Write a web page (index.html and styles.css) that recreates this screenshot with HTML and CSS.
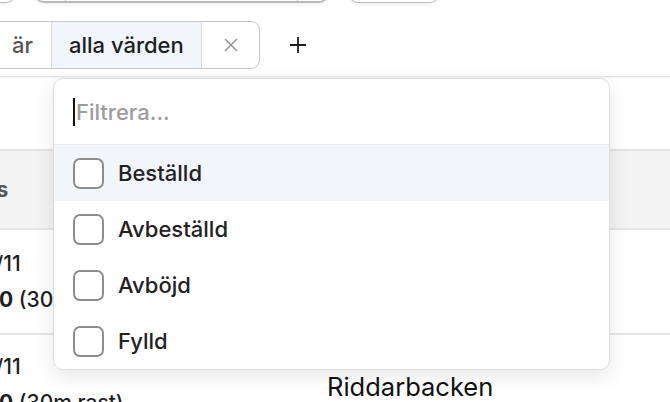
FILE: index.html
```html
<!DOCTYPE html>
<html lang="sv">
<head>
<meta charset="utf-8">
<title>Filter</title>
<link rel="stylesheet" href="styles.css">
</head>
<body>
<div class="page">
  <div class="topbar">
    <div class="tb-pill"></div>
    <div class="tb-group">
      <div class="tb-seg tb-seg-a"></div>
      <div class="tb-seg tb-seg-b"></div>
      <div class="tb-seg tb-seg-c"></div>
    </div>
    <div class="tb-btn"></div>
  </div>

  <div class="filters">
    <div class="chip">
      <div class="chip-seg chip-op">är</div>
      <div class="chip-seg chip-val">alla värden</div>
      <div class="chip-seg chip-x">
        <svg width="14" height="14" viewBox="0 0 14 14"><path d="M1 1L13 13M13 1L1 13" stroke="#8f8f8f" stroke-width="1.4" fill="none"/></svg>
      </div>
    </div>
    <div class="add">
      <svg width="18" height="18" viewBox="0 0 18 18"><path d="M9 1V17M1 9H17" stroke="#1f1f1f" stroke-width="1.8" fill="none"/></svg>
    </div>
  </div>

  <div class="table">
    <div class="thead">
      <div class="cell c1 th">Status</div>
      <div class="cell c2 th">Plats</div>
    </div>
    <div class="row">
      <div class="cell c1">
        <div>Ons 16/11</div>
        <div class="time"><b>7–16:30</b> (30m rast)</div>
      </div>
      <div class="cell c2">Riddarbacken</div>
    </div>
    <div class="row row-last">
      <div class="cell c1">
        <div>Ons 16/11</div>
        <div class="time"><b>7–16:30</b> (30m rast)</div>
      </div>
      <div class="cell c2">Riddarbacken</div>
    </div>
  </div>

  <div class="dropdown">
    <div class="dd-search">
      <span class="caret"></span><span class="placeholder">Filtrera...</span>
    </div>
    <ul class="dd-list">
      <li class="dd-item active"><span class="box"></span>Beställd</li>
      <li class="dd-item"><span class="box"></span>Avbeställd</li>
      <li class="dd-item"><span class="box"></span>Avböjd</li>
      <li class="dd-item"><span class="box"></span>Fylld</li>
    </ul>
  </div>
</div>
</body>
</html>
```

FILE: styles.css
```css
* { box-sizing: border-box; }
html, body { margin: 0; padding: 0; background: #fff; }
body {
  font-family: "Inter", "Noto Sans", sans-serif;
  font-weight: 500;
  color: #1e1e1e;
  width: 670px;
  height: 402px;
  overflow: hidden;
}
.page { position: relative; width: 670px; height: 402px; overflow: hidden; }

/* top bar, mostly scrolled off */
.topbar {
  display: flex;
  align-items: flex-end;
  height: 40px;
  margin-top: -37px;
}
.tb-pill {
  width: 40px; height: 40px;
  margin-left: -24px;
  border: 1px solid #bdbdbd;
  border-radius: 10px;
  box-shadow: 0 1px 3px rgba(0,0,0,0.08);
}
.tb-group {
  display: flex;
  margin-left: 18px;
  width: 295px; height: 40px;
  border: 1px solid #b9b9b9;
  border-bottom-width: 2px;
  border-radius: 10px;
  box-shadow: 0 2px 4px rgba(0,0,0,0.06);
}
.tb-seg-a { width: 31px; border-right: 1px solid #c9c9c9; }
.tb-seg-b { flex: 1; border-right: 1px solid #c9c9c9; }
.tb-seg-c { width: 30px; }
.tb-btn {
  margin-left: 19px;
  width: 92px; height: 40px;
  border: 1px solid #bdbdbd;
  border-radius: 10px;
  box-shadow: 0 2px 4px rgba(0,0,0,0.06);
}

/* filter chip row */
.filters {
  display: flex;
  align-items: flex-start;
  height: 56px;
  margin-top: 18px;
  border-bottom: 1px solid #e6e6e6;
  box-shadow: 0 1px 0 #f3f3f3;
}
.chip {
  display: flex;
  height: 48px;
  margin-left: -40px;
  border: 1px solid #c8c8c8;
  border-radius: 9px;
  overflow: hidden;
  font-size: 22px;
}
.chip-seg {
  display: flex;
  align-items: center;
  height: 100%;
}
.chip-op { width: 90px; padding-left: 51px; color: #555; }
.chip-val {
  width: 151px;
  padding-left: 17px;
  background: #f0f6fb;
  border-left: 1px solid #dcdcdc;
  border-right: 1px solid #dcdcdc;
  color: #1e1e1e;
}
.chip-x { width: 57px; justify-content: center; }
.add {
  display: flex;
  align-items: center;
  justify-content: center;
  width: 18px; height: 48px;
  margin-left: 29px;
}

/* table */
.table { margin-top: 72px; margin-left: -102px; }
.thead, .row { display: flex; }
.thead {
  height: 81px;
  background: #f3f3f3;
  border-top: 2px solid #e4e4e4;
  border-bottom: 2px solid #e4e4e4;
  align-items: center;
}
.row {
  height: 105px;
  border-bottom: 2px solid #e6e6e6;
  align-items: center;
}
.cell { font-size: 21px; line-height: 36px; }
.th { font-weight: 700; color: #555; }
.th.c1 { text-indent: 14px; }
.c1 { width: 429px; padding-left: 30px; }
.c2 { flex: 1; font-size: 25.5px; font-weight: 400; color: #111; }
.th.c2 { font-size: 21px; font-weight: 700; color: #555; }
.time { text-indent: 5px; }
.time b { font-weight: 700; }
.row-last { align-items: flex-start; }
.row-last .c1 { padding-top: 14px; }
.row-last .c2 { padding-top: 34px; }

/* dropdown overlay */
.dropdown {
  position: absolute;
  left: 53px;
  top: 78px;
  width: 557px;
  height: 292px;
  background: #fff;
  border: 1px solid #dedede;
  border-radius: 10px;
  box-shadow: 0 6px 20px rgba(0,0,0,0.10);
  overflow: hidden;
}
.dd-search {
  display: flex;
  align-items: center;
  height: 66px;
  padding-left: 19px;
  border-bottom: 1px solid #ececec;
}
.caret {
  display: inline-block;
  width: 2px; height: 28px;
  background: #111;
  margin-right: 1px;
}
.placeholder { font-size: 22px; color: #9d9d9d; }
.dd-list { list-style: none; margin: 0; padding: 0; }
.dd-item {
  display: flex;
  align-items: center;
  height: 56px;
  padding-left: 19px;
  font-size: 22px;
  color: #222;
}
.dd-item.active { background: #f2f6fa; }
.box {
  width: 31px; height: 31px;
  border: 2px solid #8d8d8d;
  border-radius: 7px;
  margin-right: 14px;
  background: #fff;
}
```
